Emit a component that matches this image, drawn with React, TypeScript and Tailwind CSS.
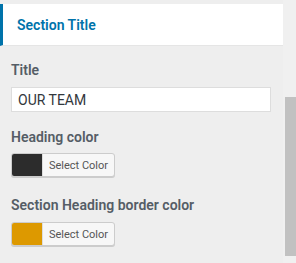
import React from "react";

function ColorButton({ swatch }: { swatch: string }) {
  return (
    <button
      type="button"
      className="flex h-[24px] w-[104px] items-stretch overflow-hidden rounded-[3px] border border-[#cccccc] bg-[#f7f7f7] p-0 shadow-[0_1px_0_#cccccc]"
    >
      <span className="block w-[30px]" style={{ backgroundColor: swatch }} />
      <span className="flex flex-1 items-center justify-center border-l border-[#dddddd] text-[11px] leading-none text-[#555555]">
        Select Color
      </span>
    </button>
  );
}

export default function App() {
  return (
    <div className="flex h-[263px] w-[296px] overflow-hidden bg-[#eeeeee] font-['Roboto',sans-serif]">
      <div className="flex w-[283px] flex-col pt-[4px]">
        {/* Header */}
        <div className="flex h-[42px] items-center border-l-[3px] border-[#0073aa] bg-white pl-[14px] border-b border-b-[#e5e5e5]">
          <span className="text-[14px] font-semibold leading-[20px] text-[#0073aa]">
            Section Title
          </span>
        </div>

        <div className="flex flex-col px-[11px] pt-[14px]">
          <label className="text-[14px] font-semibold leading-[20px] text-[#555d66]">
            Title
          </label>
          <input
            type="text"
            defaultValue="OUR TEAM"
            className="mt-[7px] h-[25px] w-[260px] border border-[#dddddd] bg-white px-[6px] text-[14px] text-[#32373c] outline-none"
          />

          <label className="mt-[15px] text-[14px] font-semibold leading-[20px] text-[#555d66]">
            Heading color
          </label>
          <div className="mt-[6px]">
            <ColorButton swatch="#2c2c2c" />
          </div>

          <label className="mt-[18px] text-[14px] font-semibold leading-[20px] text-[#555d66]">
            Section Heading border color
          </label>
          <div className="mt-[7px]">
            <ColorButton swatch="#dd9900" />
          </div>
        </div>
      </div>

      {/* Scrollbar */}
      <div className="flex w-[13px] flex-col bg-[#f0f0f0] pl-[2px]">
        <div className="mt-[97px] h-[159px] w-full bg-[#c1c1c1]" />
      </div>
    </div>
  );
}
